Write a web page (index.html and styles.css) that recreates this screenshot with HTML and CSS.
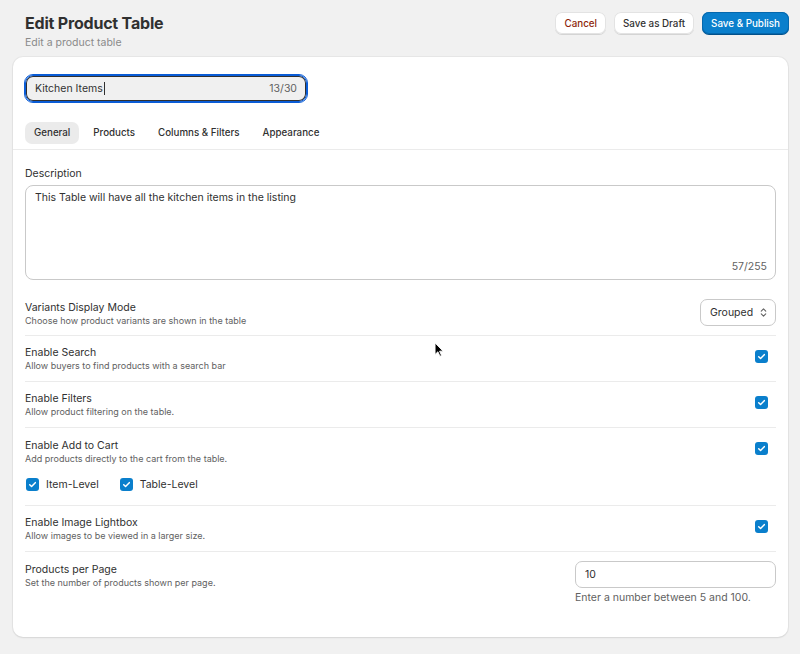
FILE: index.html
```html
<!DOCTYPE html>
<html>
<head>
<meta charset="utf-8">
<link rel="stylesheet" href="styles.css">
</head>
<body>
<div class="page">
  <header class="header">
    <div class="head-text">
      <h1 class="title">Edit Product Table</h1>
      <p class="subtitle">Edit a product table</p>
    </div>
    <div class="actions">
      <button class="btn btn-cancel">Cancel</button>
      <button class="btn">Save as Draft</button>
      <button class="btn btn-primary">Save &amp; Publish</button>
    </div>
  </header>

  <main class="card">
    <div class="card-top">
      <div class="name-field">
        <span class="name-value">Kitchen Items<span class="caret"></span></span>
        <span class="counter">13/30</span>
      </div>
      <nav class="tabs">
        <span class="tab active">General</span>
        <span class="tab">Products</span>
        <span class="tab">Columns &amp; Filters</span>
        <span class="tab">Appearance</span>
      </nav>
    </div>

    <div class="card-body">
      <div class="desc-block">
        <label class="label">Description</label>
        <div class="textarea">
          <span>This Table will have all the kitchen items in the listing</span>
          <span class="ta-count">57/255</span>
        </div>
      </div>

      <div class="row row-first">
        <div class="row-text">
          <div class="row-title">Variants Display Mode</div>
          <div class="row-desc">Choose how product variants are shown in the table</div>
        </div>
        <div class="select">Grouped
          <svg class="sel-icon" viewBox="0 0 10 14" width="9" height="13"><path d="M2.5 5.5L5 3l2.5 2.5M2.5 8.5L5 11l2.5-2.5" fill="none" stroke="#616161" stroke-width="1.2" stroke-linecap="round" stroke-linejoin="round"/></svg>
        </div>
      </div>

      <div class="row">
        <div class="row-text">
          <div class="row-title">Enable Search</div>
          <div class="row-desc">Allow buyers to find products with a search bar</div>
        </div>
        <span class="check"><svg viewBox="0 0 14 14" width="13" height="13"><path d="M4 7.2l2 2 4-4.2" fill="none" stroke="#fff" stroke-width="1.6" stroke-linecap="round" stroke-linejoin="round"/></svg></span>
      </div>

      <div class="row">
        <div class="row-text">
          <div class="row-title">Enable Filters</div>
          <div class="row-desc">Allow product filtering on the table.</div>
        </div>
        <span class="check"><svg viewBox="0 0 14 14" width="13" height="13"><path d="M4 7.2l2 2 4-4.2" fill="none" stroke="#fff" stroke-width="1.6" stroke-linecap="round" stroke-linejoin="round"/></svg></span>
      </div>

      <div class="row row-cart">
        <div class="row-main">
          <div class="row-text">
            <div class="row-title">Enable Add to Cart</div>
            <div class="row-desc">Add products directly to the cart from the table.</div>
          </div>
          <span class="check"><svg viewBox="0 0 14 14" width="13" height="13"><path d="M4 7.2l2 2 4-4.2" fill="none" stroke="#fff" stroke-width="1.6" stroke-linecap="round" stroke-linejoin="round"/></svg></span>
        </div>
        <div class="sub-checks">
          <span class="sub"><span class="check"><svg viewBox="0 0 14 14" width="13" height="13"><path d="M4 7.2l2 2 4-4.2" fill="none" stroke="#fff" stroke-width="1.6" stroke-linecap="round" stroke-linejoin="round"/></svg></span>Item-Level</span>
          <span class="sub"><span class="check"><svg viewBox="0 0 14 14" width="13" height="13"><path d="M4 7.2l2 2 4-4.2" fill="none" stroke="#fff" stroke-width="1.6" stroke-linecap="round" stroke-linejoin="round"/></svg></span>Table-Level</span>
        </div>
      </div>

      <div class="row">
        <div class="row-text">
          <div class="row-title">Enable Image Lightbox</div>
          <div class="row-desc">Allow images to be viewed in a larger size.</div>
        </div>
        <span class="check"><svg viewBox="0 0 14 14" width="13" height="13"><path d="M4 7.2l2 2 4-4.2" fill="none" stroke="#fff" stroke-width="1.6" stroke-linecap="round" stroke-linejoin="round"/></svg></span>
      </div>

      <div class="row row-last">
        <div class="row-text">
          <div class="row-title">Products per Page</div>
          <div class="row-desc">Set the number of products shown per page.</div>
        </div>
        <div class="num-field">
          <div class="num-input">10</div>
          <div class="help">Enter a number between 5 and 100.</div>
        </div>
      </div>
    </div>
  </main>
</div>
<svg class="cursor" viewBox="0 0 12 18" width="11" height="16"><path d="M1 1v13l3.2-3 2.3 5 1.8-.8-2.2-4.9H10z" fill="#000" stroke="#fff" stroke-width="1"/></svg>
</body>
</html>
```

FILE: styles.css
```css
* { box-sizing: border-box; }
html, body { margin: 0; padding: 0; }
body {
  background: #f1f1f1;
  font-family: Inter, "Noto Sans", sans-serif;
  color: #303030;
  width: 800px;
  height: 654px;
  overflow: hidden;
  position: relative;
}
.page { padding: 11px 12px 0 13px; }
.header {
  display: flex;
  justify-content: space-between;
  align-items: flex-start;
  padding: 0 0 0 12px;
}
.title {
  margin: 2px 0 0;
  font-size: 16px;
  font-weight: 700;
  color: #303030;
  letter-spacing: -0.2px;
  line-height: 20px;
}
.subtitle {
  margin: 3px 0 0;
  font-size: 10.5px;
  color: #8a8a8a;
  line-height: 14px;
}
.actions { display: flex; gap: 8px; padding-top: 1px; margin-right: -1px; }
.btn {
  font-family: Inter, sans-serif;
  font-size: 9.8px;
  font-weight: 500;
  color: #303030;
  background: #fff;
  border: none;
  border-radius: 7px;
  height: 22px;
  padding: 0 9px;
  box-shadow: 0 1px 0 #d4d4d4, inset 0 0 0 1px #e3e3e3;
}
.btn-cancel { color: #8e1f0b; }
.btn-primary {
  background: #0a7fcc;
  color: #fff;
  box-shadow: 0 1px 0 #03518a, inset 0 0 0 1px #0568ad;
  padding: 0 9px;
}
.card {
  margin-top: 7px;
  background: #fff;
  border-radius: 10px;
  box-shadow: 0 1px 2px rgba(0,0,0,0.08), 0 0 0 1px rgba(0,0,0,0.04);
  height: 580px;
}
.card-top {
  padding: 18px 12px 0;
  border-bottom: 1px solid #ebebeb;
}
.name-field {
  width: 282px;
  height: 27px;
  border: 1px solid #0a5cd6;
  outline: 1px solid #0a5cd6;
  outline-offset: 0;
  border-radius: 8px;
  background: #f0f0f0;
  display: flex;
  justify-content: space-between;
  align-items: center;
  padding: 0 9px;
  font-size: 10.5px;
  box-shadow: inset 0 0 0 1px #303030;
}
.name-value { color: #303030; display: flex; align-items: center; }
.caret { display: inline-block; width: 1px; height: 13px; background: #303030; margin-left: 1px; }
.counter { color: #616161; font-size: 10.5px; }
.tabs {
  display: flex;
  gap: 4px;
  padding: 20px 0 5px;
}
.tab {
  font-size: 9.75px;
  font-weight: 500;
  color: #303030;
  height: 22px;
  line-height: 22px;
  padding: 0 9px;
  border-radius: 7px;
}
.tab + .tab { margin-left: 1px; }
.tab.active { background: #ebebeb; }
.card-body { padding: 17px 12px 0; }
.label { font-size: 10.5px; color: #303030; display: block; line-height: 14px; }
.textarea {
  margin-top: 4px;
  height: 95px;
  border: 1px solid #c9c9c9;
  border-radius: 8px;
  padding: 5px 9px;
  font-size: 10.5px;
  position: relative;
  color: #303030;
}
.ta-count {
  position: absolute;
  right: 8px;
  bottom: 6px;
  color: #616161;
  font-size: 10.5px;
}
.desc-block { padding-bottom: 10px; }
.row {
  display: flex;
  justify-content: space-between;
  align-items: center;
  border-bottom: 1px solid #ebebeb;
  height: 46px;
}
.row-first .row-text { padding-top: 3px; }
.row-text { display: flex; flex-direction: column; }
.row-title { font-size: 10.5px; color: #303030; line-height: 14px; }
.row-desc { font-size: 9px; color: #616161; line-height: 12px; }
.select {
  height: 27px;
  border: 1px solid #c9c9c9;
  border-radius: 7px;
  display: flex;
  align-items: center;
  justify-content: space-between;
  padding: 0 7px 0 9px;
  font-size: 10.5px;
  color: #303030;
  width: 76px;
}
.check {
  width: 13px;
  height: 13px;
  border-radius: 3px;
  background: #0a7fcc;
  display: inline-flex;
}
.row > .check { margin-right: 8px; margin-top: -5px; }
.row-cart { height: auto; flex-direction: column; align-items: stretch; padding: 11px 0 14px; }
.row-main { display: flex; justify-content: space-between; align-items: flex-start; }
.row-main > .check { margin-top: 3px; margin-right: 8px; }
.sub-checks { display: flex; gap: 20px; margin-top: 13px; }
.sub { display: inline-flex; align-items: center; font-size: 10.5px; color: #303030; }
.sub .check { margin-right: 7px; margin-left: 1px; }
.row-last { border-bottom: none; align-items: flex-start; height: auto; padding-top: 9px; }
.row-last .row-text { padding-top: 2px; }
.num-field { width: 201px; }
.num-input {
  height: 27px;
  border: 1px solid #c9c9c9;
  border-radius: 7px;
  padding: 0 9px;
  font-size: 10.5px;
  line-height: 25px;
  color: #303030;
}
.help { font-size: 10.5px; color: #616161; margin-top: 3px; }
.cursor { position: absolute; left: 434px; top: 342px; }
```
